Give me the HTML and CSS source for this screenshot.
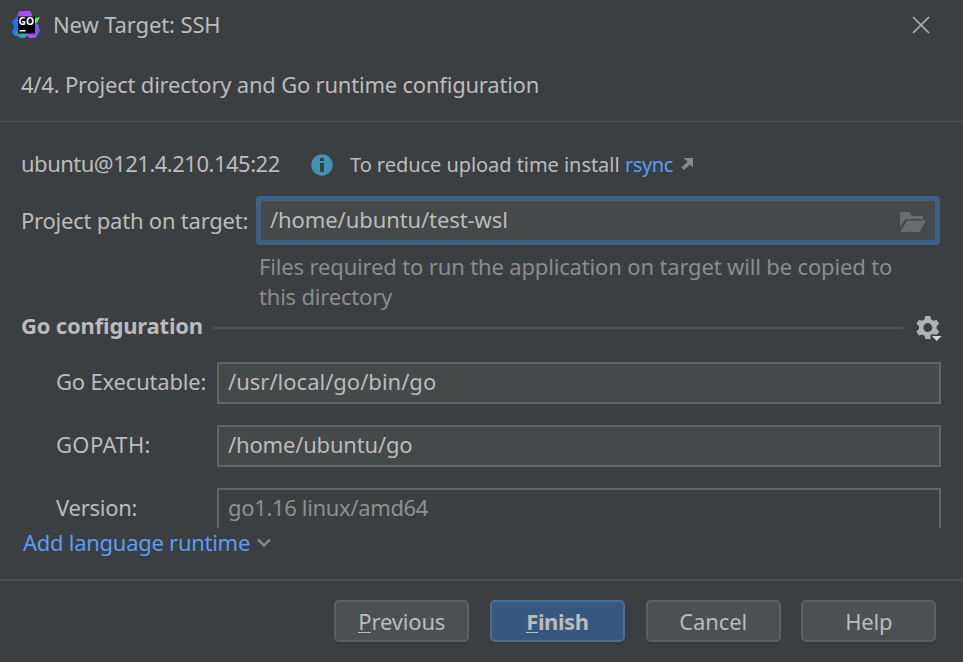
FILE: index.html
```
<!DOCTYPE html>
<html lang="en">
<head>
<meta charset="utf-8">
<title>New Target: SSH</title>
<link rel="stylesheet" href="styles.css">
</head>
<body>
<div class="dialog">
  <header class="titlebar">
    <svg class="logo" width="30" height="30" viewBox="0 0 30 30">
      <defs>
        <linearGradient id="g1" x1="0" y1="0" x2="1" y2="1"><stop offset="0" stop-color="#6a55ff"/><stop offset=".35" stop-color="#a94df8"/><stop offset="1" stop-color="#b74af7"/></linearGradient>
        <linearGradient id="g2" x1="0" y1="0" x2="0" y2="1"><stop offset="0" stop-color="#3b62f8"/><stop offset=".5" stop-color="#087cfa"/><stop offset="1" stop-color="#2a7bef"/></linearGradient>
        <linearGradient id="g3" x1="0" y1="0" x2="1" y2="0"><stop offset="0" stop-color="#1584e8"/><stop offset=".5" stop-color="#22b5a0"/><stop offset="1" stop-color="#7a6be0"/></linearGradient>
        <linearGradient id="g4" x1="1" y1="0" x2="0" y2="1"><stop offset="0" stop-color="#2c6cf8"/><stop offset=".6" stop-color="#9150f8"/><stop offset="1" stop-color="#c54af0"/></linearGradient>
      </defs>
      <path d="M8.500 1H19.500L22 7H6L7 3Z" fill="url(#g1)"/>
      <path d="M6 7L1 11.500 3 17 1 22.500 4 26H8V7Z" fill="url(#g2)"/>
      <path d="M2 24L10 28H13L20 24V22H4Z" fill="url(#g3)"/>
      <path d="M20 5L25 8 24 14 27 14 29 21 24.500 28H18L16 23 22 20Z" fill="url(#g4)"/>
      <path d="M23 8.500L29 7 26 12.500 24 14Z" fill="#56ee6a"/>
      <path d="M7 6.500H24V23.500H7Z" fill="#000"/>
      <path d="M8.500 20H14.500V21.500H8.500Z" fill="#fff"/>
      <text x="7.600" y="14.700" class="logo-text" textLength="15.500" lengthAdjust="spacingAndGlyphs">GO</text>
    </svg>
    <span class="t t-title">New Target: SSH</span>
    <svg class="close" width="20" height="20" viewBox="0 0 20 20"><path d="M2 2L18 18M18 2L2 18" fill="none" stroke="#afb1b3" stroke-width="1.700"/></svg>
  </header>
  <h1 class="step"><span class="t t-step">4/4. Project directory and Go runtime configuration</span></h1>
  <main class="content">
    <div class="host">
      <span class="t t-host">ubuntu@121.4.210.145:22</span>
      <svg class="info" width="22" height="22" viewBox="0 0 22 22"><circle cx="11" cy="11" r="10.700" fill="#3f94b3"/><path d="M9 4H13V7H9ZM9 9H13V18H9Z" fill="#3c3f41"/></svg>
      <span class="t t-tip">To reduce upload time install</span>
      <a class="t t-rsync">rsync</a>
      <svg class="ext" width="13" height="13" viewBox="0 0 13 13"><path d="M2.500 1H12V10.500L9 7.500 3 13 .5 10.500 6.500 4.500Z" fill="#7f8b91"/></svg>
    </div>
    <div class="path">
      <label class="t t-path">Project path on target:</label>
      <div class="focus-field">
        <span class="t t-value">/home/ubuntu/test-wsl</span>
        <svg class="folder" width="28" height="22" viewBox="0 0 28 22"><path d="M1 1H10L13 5H24V8H6.500L1 16.500Z" fill="#656d70"/><path d="M8 9.500H27L20.500 21H1.500Z" fill="#656d70"/></svg>
      </div>
    </div>
    <p class="hint"><span class="t t-hint1">Files required to run the application on target will be copied to</span><br><span class="t t-hint2">this directory</span></p>
    <div class="section">
      <h2 class="t t-section">Go configuration</h2>
      <div class="rule"></div>
      <svg width="26" height="28" viewBox="0 0 26 28"><path fill-rule="evenodd" d="M9.300 1h5l.8 3.500 2.300 1.300 3.300-1.100 2.400 4.100-2.500 2.500v2.700l2.500 2.500-2.400 4.100-3.300-1.100-2.300 1.300-.8 3.300h-5l-.8-3.300-2.300-1.300-3.300 1.100L.5 16.500 3 14v-2.700L.5 8.800l2.400-4.100 3.300 1.100 2.300-1.300ZM11.800 8.100a4.500 4.500 0 1 0 0 9 4.500 4.500 0 1 0 0-9Z" fill="#afb1b3"/><path d="M14.500 19.500H26V22L20.500 28 14.500 22Z" fill="#3c3f41"/><path d="M16 21H25.500L20.700 26Z" fill="#d4d5d6"/></svg>
    </div>
    <div class="form">
      <div class="row"><label class="t t-exe">Go Executable:</label><div class="field"><span class="t t-exe-v">/usr/local/go/bin/go</span></div></div>
      <div class="row"><label class="t t-gopath">GOPATH:</label><div class="field"><span class="t t-gopath-v">/home/ubuntu/go</span></div></div>
      <div class="row"><label class="t t-ver">Version:</label><div class="field disabled"><span class="t t-ver-v">go1.16 linux/amd64</span></div></div>
    </div>
    <div class="add"><a class="t t-add">Add language runtime</a><svg width="14" height="10" viewBox="0 0 14 10"><path d="M1 1.500L7 7.500 13 1.500" fill="none" stroke="#7b868c" stroke-width="2.600"/></svg></div>
  </main>
  <footer class="buttons">
    <button class="btn"><span class="t"><span class="mn">P</span>revious</span></button>
    <button class="btn primary"><span class="t"><span class="mn">F</span>inish</span></button>
    <button class="btn"><span class="t">Cancel</span></button>
    <button class="btn"><span class="t">Help</span></button>
  </footer>
</div>
</body>
</html>
```
FILE: styles.css
```
* { box-sizing: border-box; }
body {
  margin: 0;
  background: #3c3f41;
  color: #bbbbbb;
  font: 22px/30px "Noto Sans", "Open Sans", sans-serif;
  overflow: hidden;
}
h1, h2, p { margin: 0; font-size: inherit; font-weight: normal; }
svg { display: block; flex: none; }
.t { white-space: nowrap; }
.dialog { height: 662px; display: flex; flex-direction: column; }
.titlebar { height: 50px; display: flex; align-items: center; padding: 0 32px 0 11px; }
.t-title { margin: -2px 0 0 12px; letter-spacing: -0.12px; }
.logo-text { font: bold 10.5px "Open Sans", sans-serif; fill: #fff; }
.close { margin-left: auto; }
.step { height: 72px; padding: 19px 0 0 21px; border-bottom: 1px solid #4f5254; }
.t-step { letter-spacing: -0.21px; }
.content { height: 457px; }
.host { height: 74px; padding: 12px 0 0 21px; display: flex; align-items: center; }
.t-host { width: 259px; margin-top: -4px; letter-spacing: -0.5px; }
.info { margin-left: 31px; }
.t-tip { width: 269px; margin-left: 17px; font-size: 20px; letter-spacing: -0.05px; }
.t-rsync { width: 48px; margin-left: 6px; font-size: 20px; letter-spacing: -0.4px; }
a { color: #589df6; }
.ext { margin: -3px 0 0 8px; }
.path { display: flex; align-items: center; height: 49px; padding-left: 21px; }
.t-path { width: 235px; margin-top: -2px; letter-spacing: -0.22px; }
.focus-field {
  width: 684px; height: 49px; border: 5px solid #3d6185; border-radius: 4px;
  background: #45494a; display: flex; align-items: center; justify-content: space-between;
  padding: 0 8px 0 9px;
}
.t-value { margin-top: -3px; letter-spacing: -0.09px; }
.folder { margin-top: 2px; }
.hint { height: 67px; padding: 6px 0 0 259px; color: #8c8c8c; }
.t-hint1 { letter-spacing: -0.155px; }
.t-hint2 { letter-spacing: -0.2px; }
.section { height: 30px; display: flex; align-items: center; padding: 0 20px 0 21px; }
.t-section { font-weight: bold; width: 192px; margin-top: -5px; letter-spacing: -0.18px; }
.rule { width: 690px; height: 2px; background: #515151; margin-top: 2px; }
.section svg { margin-left: 13px; margin-top: 3px; }
.form { height: 186px; padding: 20px 0 0 56px; overflow: hidden; display: flex; flex-direction: column; gap: 21px; }
.row { display: flex; flex: none; height: 42px; align-items: center; }
.row label { width: 161px; }
.row .t { margin-top: -5px; }
.t-exe { letter-spacing: -0.18px; }
.t-gopath { letter-spacing: 0.35px; }
.t-gopath-v { letter-spacing: -0.18px; }
.t-ver { letter-spacing: -0.25px; }
.t-ver-v { letter-spacing: -0.34px; }
.field { width: 724px; height: 42px; border: 2px solid #646464; background: #45494a; display: flex; align-items: center; padding-left: 9px; }
.field.disabled { background: #3c3f41; color: #8f8f8f; }
.add { height: 32px; display: flex; align-items: center; padding-left: 23px; }
.t-add { width: 227px; margin-top: -5px; letter-spacing: -0.27px; }
.add svg { margin-left: 7px; margin-top: -3px; }
.buttons { flex: 1; border-top: 2px solid #515151; margin-right: 1px; display: flex; gap: 20.7px; justify-content: flex-end; padding: 19px 25.7px 0 0; }
.btn {
  width: 135px; height: 42px; padding: 0; border: 2px solid #5e6060; border-radius: 5px;
  background: #4c5052; color: #bbbbbb; font: inherit; box-shadow: 0 2px 1px #36393b;
  letter-spacing: -0.15px;
}
.primary { background: #365880; border-color: #4c708c; font-weight: bold; letter-spacing: -0.45px; }
.mn { box-shadow: 0 1px 0 #bbbbbb; display: inline-block; height: 26px; line-height: 30px; }
```
